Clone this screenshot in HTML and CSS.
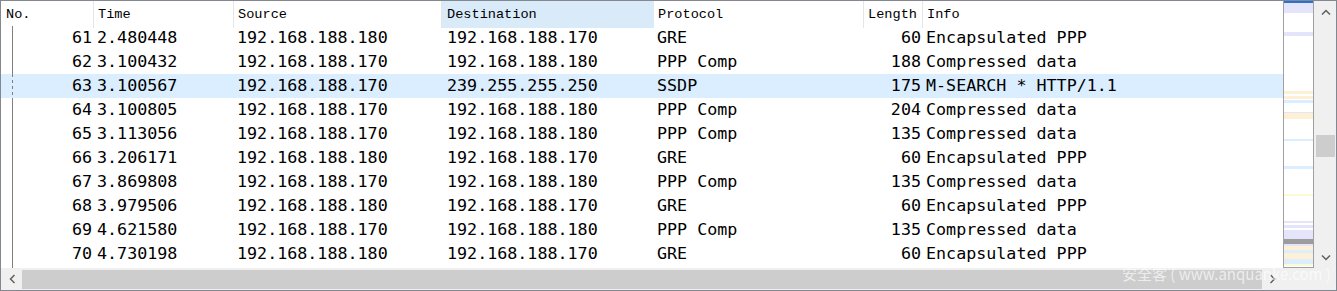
FILE: index.html
```html
<!DOCTYPE html>
<html lang="en">
<head>
    <meta charset="UTF-8">
    <title>Packet list</title>
    <link rel="stylesheet" href="styles.css">
</head>
<body>
    <div class="frame">
        <div class="list">
            <div class="head">
                <div class="hc">No.</div>
                <div class="hc">Time</div>
                <div class="hc">Source</div>
                <div class="hc hc-hover">Destination</div>
                <div class="hc">Protocol</div>
                <div class="hc">Length</div>
                <div class="hc">Info</div>
            </div>
            <div class="rows">
                <div class="row"><span class="num">61</span><span>2.480448</span><span>192.168.188.180</span><span class="dst">192.168.188.170</span><span>GRE</span><span class="num">60</span><span>Encapsulated PPP</span></div>
                <div class="row"><span class="num">62</span><span>3.100432</span><span>192.168.188.170</span><span class="dst">192.168.188.180</span><span>PPP Comp</span><span class="num">188</span><span>Compressed data</span></div>
                <div class="row row-udp"><span class="num">63</span><span>3.100567</span><span>192.168.188.170</span><span class="dst">239.255.255.250</span><span>SSDP</span><span class="num">175</span><span>M-SEARCH * HTTP/1.1</span></div>
                <div class="row"><span class="num">64</span><span>3.100805</span><span>192.168.188.170</span><span class="dst">192.168.188.180</span><span>PPP Comp</span><span class="num">204</span><span>Compressed data</span></div>
                <div class="row"><span class="num">65</span><span>3.113056</span><span>192.168.188.170</span><span class="dst">192.168.188.180</span><span>PPP Comp</span><span class="num">135</span><span>Compressed data</span></div>
                <div class="row"><span class="num">66</span><span>3.206171</span><span>192.168.188.180</span><span class="dst">192.168.188.170</span><span>GRE</span><span class="num">60</span><span>Encapsulated PPP</span></div>
                <div class="row"><span class="num">67</span><span>3.869808</span><span>192.168.188.170</span><span class="dst">192.168.188.180</span><span>PPP Comp</span><span class="num">135</span><span>Compressed data</span></div>
                <div class="row"><span class="num">68</span><span>3.979506</span><span>192.168.188.180</span><span class="dst">192.168.188.170</span><span>GRE</span><span class="num">60</span><span>Encapsulated PPP</span></div>
                <div class="row"><span class="num">69</span><span>4.621580</span><span>192.168.188.170</span><span class="dst">192.168.188.180</span><span>PPP Comp</span><span class="num">135</span><span>Compressed data</span></div>
                <div class="row"><span class="num">70</span><span>4.730198</span><span>192.168.188.180</span><span class="dst">192.168.188.170</span><span>GRE</span><span class="num">60</span><span>Encapsulated PPP</span></div>
            </div>
        </div>

        <!-- minimap: stripe places are packet colours along the capture -->
        <div class="minimap">
            <i class="mark" style="top:0;height:2px"></i>
            <i class="lav" style="top:2px;height:10px"></i>
            <i class="lav" style="top:31px;height:4px"></i>
            <i class="cream" style="top:90px;height:3px"></i>
            <i class="cream" style="top:95px;height:3px"></i>
            <i class="blue" style="top:99px;height:3px"></i>
            <i class="lav" style="top:111px;height:2px"></i>
            <i class="cream" style="top:112px;height:6px"></i>
            <i class="blue" style="top:138px;height:2px"></i>
            <i class="blue" style="top:165px;height:3px"></i>
            <i class="yel" style="top:193px;height:2px"></i>
            <i class="lav" style="top:220px;height:2px"></i>
            <i class="lav" style="top:224px;height:3px"></i>
            <i class="lav" style="top:229px;height:9px"></i>
            <i class="dark" style="top:238px;height:5px"></i>
            <i class="lav" style="top:243px;height:2px"></i>
            <i class="cream" style="top:245px;height:4px"></i>
            <i class="blue" style="top:249px;height:3px"></i>
            <i class="cream" style="top:252px;height:6px"></i>
            <i class="blue" style="top:258px;height:5px"></i>
            <i class="yel" style="top:263px;height:2px"></i>
        </div>

        <div class="vscroll">
            <div class="sbtn">
                <svg width="10" height="6" viewBox="0 0 10 6"><path d="M1 5.5 L5 1.5 L9 5.5" fill="none" stroke="#606060" stroke-width="1.5"/></svg>
            </div>
            <div class="vthumb"></div>
            <div class="vspace"></div>
            <div class="sbtn">
                <svg width="10" height="6" viewBox="0 0 10 6"><path d="M1 0.5 L5 4.5 L9 0.5" fill="none" stroke="#606060" stroke-width="1.5"/></svg>
            </div>
        </div>

        <div class="hscroll">
            <div class="hbtn">
                <svg width="6" height="10" viewBox="0 0 6 10"><path d="M5.5 1 L1.5 5 L5.5 9" fill="none" stroke="#606060" stroke-width="1.5"/></svg>
            </div>
            <div class="hthumb"></div>
            <div class="hbtn">
                <svg width="6" height="10" viewBox="0 0 6 10"><path d="M0.5 1 L4.5 5 L0.5 9" fill="none" stroke="#606060" stroke-width="1.5"/></svg>
            </div>
        </div>
        <div class="corner"></div>

        <div class="watermark">安全客 ( www.anquanke.com )</div>
    </div>
</body>
</html>
```

FILE: styles.css
```css
:root {
    --cols: 93px 140px 208px 212px 210px 59px 1fr;
    --line: #7f7f7f;
}

body {
    margin: 0;
    background: #fff;
}

.frame {
    position: relative;
    width: 1335px;
    height: 289px;
    border: 1px solid #828790;
    display: grid;
    grid-template-columns: 1282px 31px 22px;
    grid-template-rows: 267px 22px;
    overflow: hidden;
}

/* packet list */
.list {
    background: #fff;
    overflow: hidden;
}

.head {
    display: grid;
    grid-template-columns: var(--cols);
    height: 25px;
    font-family: "Liberation Mono", monospace;
    font-size: 13.6px;
    color: #000;
}

.hc {
    border-right: 1px solid #e5e5e5;
    padding: 0 4px;
    line-height: 27px;
    white-space: nowrap;
}

.hc:first-child {
    padding-left: 5px;
}

.hc:last-child {
    border-right: none;
}

.hc-hover {
    background: #d9ebf9;
    border-right-color: #d9ebf9;
    padding-left: 5px;
}

.rows {
    height: 242px;
    background: linear-gradient(var(--line), var(--line)) no-repeat 11px 0 / 1px 100%;
}

.row {
    display: grid;
    grid-template-columns: var(--cols);
    height: 24px;
    line-height: 23px;
    font-family: "DejaVu Sans Mono", monospace;
    font-size: 16.7px;
    color: #000;
    white-space: nowrap;
}

.row span {
    padding-left: 3px;
    overflow: hidden;
}

.row .num {
    text-align: right;
    padding: 0 2px 0 0;
}

.row .dst {
    padding-left: 5px;
}

.row-udp {
    background:
        repeating-linear-gradient(to bottom, var(--line) 0 3px, transparent 3px 6px) no-repeat 11px 0 / 1px 100%,
        #daeeff;
}

/* colour overview */
.minimap {
    position: relative;
    border: 1px solid #a0a0a0;
    border-top: none;
    background: #fff;
}

.minimap i {
    position: absolute;
    left: 0;
    right: 0;
}

.mark { background: #2a72d2; }
.lav { background: #e4e4fb; }
.cream { background: #fdf0d4; }
.blue { background: #daeeff; }
.yel { background: #fbfbcf; }
.dark { background: #9c9c9c; }

/* scroll bars */
.vscroll {
    display: flex;
    flex-direction: column;
    background: #f0f0f0;
}

.sbtn {
    height: 21px;
    display: flex;
    align-items: center;
    justify-content: center;
    padding-left: 1px;
}

.vthumb {
    margin: 113px 1px 0 2px;
    height: 22px;
    background: #cdcdcd;
}

.vspace {
    flex: 1;
}

.hscroll {
    display: grid;
    grid-template-columns: 21px 1fr 21px;
    background: #f0f0f0;
}

.hbtn {
    display: flex;
    align-items: center;
    justify-content: center;
}

.hthumb {
    margin: 2px 0 1px;
    background: #cdcdcd;
}

.corner {
    grid-column: 2 / 4;
    background: #f0f0f0;
}

.watermark {
    position: absolute;
    left: 1121px;
    top: 262px;
    font-family: "Noto Sans CJK SC", "Noto Sans", sans-serif;
    font-size: 15px;
    color: rgba(255, 255, 255, 0.65);
    white-space: nowrap;
    pointer-events: none;
}
```
